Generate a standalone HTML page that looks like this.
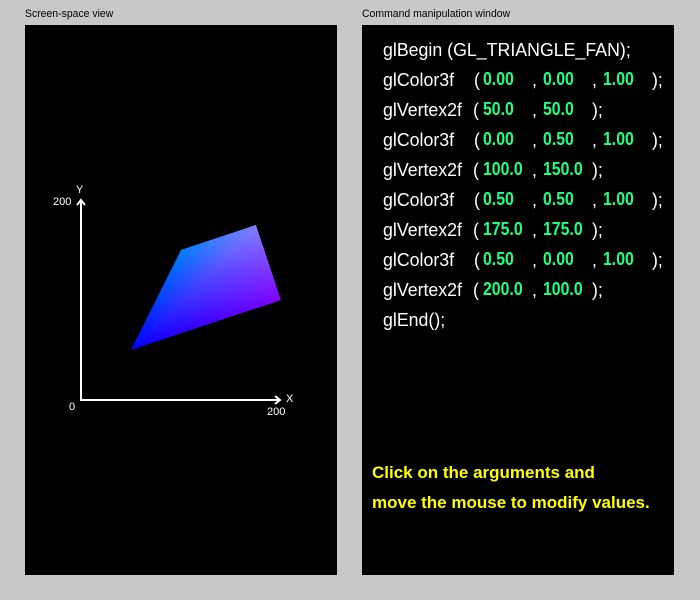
<!DOCTYPE html>
<html><head><meta charset="utf-8"><style>
html,body{margin:0;padding:0}
body{width:700px;height:600px;background:#c8c8c8;position:relative;overflow:hidden;font-family:"Liberation Sans",sans-serif}
.lbl{position:absolute;font-size:11px;color:#000;top:8px;transform:scaleX(0.95);transform-origin:left}
.panel{position:absolute;background:#000;top:25px;height:550px;width:312px}
.t{position:absolute;white-space:pre;color:#fff;font-size:18.5px;line-height:19px;transform:scaleX(0.96);transform-origin:left}
.g{color:#20ff80;font-weight:bold;font-size:18px;transform:scaleX(0.88)}
.y{position:absolute;color:#ffff00;font-weight:bold;font-size:17px;left:372px;white-space:pre}
</style></head><body>
<div class="lbl" style="left:25px">Screen-space view</div>
<div class="lbl" style="left:362px">Command manipulation window</div>
<div class="panel" style="left:25px"></div>
<div class="panel" style="left:362px"></div>
<svg width="700" height="600" style="position:absolute;left:0;top:0">
<defs>
<linearGradient id="r1" gradientUnits="userSpaceOnUse" x1="131" y1="350" x2="181" y2="375"><stop offset="0" stop-color="#000"/><stop offset="1" stop-color="#800000"/></linearGradient>
<linearGradient id="g1" gradientUnits="userSpaceOnUse" x1="131" y1="350" x2="106" y2="275"><stop offset="0" stop-color="#000"/><stop offset="1" stop-color="#008000"/></linearGradient>
<linearGradient id="r2" gradientUnits="userSpaceOnUse" x1="131" y1="350" x2="281" y2="300"><stop offset="0" stop-color="#000"/><stop offset="1" stop-color="#800000"/></linearGradient>
</defs>
<g style="isolation:isolate" shape-rendering="crispEdges">
<polygon points="131,350 181,250 256,225 281,300" fill="#0000ff"/>
<polygon points="131,350 181,250 256,225" fill="url(#r1)" style="mix-blend-mode:lighten"/>
<polygon points="131,350 256,225 281,300" fill="url(#r2)" style="mix-blend-mode:lighten"/>
<polygon points="131,350 181,250 256,225 281,300" fill="url(#g1)" style="mix-blend-mode:lighten"/>
</g>
<g stroke="#fff" stroke-width="2" fill="none">
<path d="M81,200 V400 H280"/>
<path d="M77,205 L81,200 L85,205"/>
<path d="M275,396 L280,400 L275,404"/>
</g>
<g fill="#fff" font-family="Liberation Sans, sans-serif" font-size="11">
<text x="53" y="205">200</text>
<text x="76" y="193">Y</text>
<text x="69" y="410">0</text>
<text x="286" y="402">X</text>
<text x="267" y="415">200</text>
</g>
</svg>
<div class="t" style="left:383px;top:40px">glBegin (GL_TRIANGLE_FAN);</div>

<div class="t" style="left:383px;top:70px">glColor3f</div><div class="t" style="left:474px;top:70px">(</div><div class="t g" style="left:483px;top:70px">0.00</div><div class="t" style="left:532px;top:70px">,</div><div class="t g" style="left:543px;top:70px">0.00</div><div class="t" style="left:592px;top:70px">,</div><div class="t g" style="left:603px;top:70px">1.00</div><div class="t" style="left:652px;top:70px">);</div>

<div class="t" style="left:383px;top:100px">glVertex2f</div><div class="t" style="left:473px;top:100px">(</div><div class="t g" style="left:483px;top:100px">50.0</div><div class="t" style="left:532px;top:100px">,</div><div class="t g" style="left:543px;top:100px">50.0</div><div class="t" style="left:592px;top:100px">);</div>

<div class="t" style="left:383px;top:130px">glColor3f</div><div class="t" style="left:474px;top:130px">(</div><div class="t g" style="left:483px;top:130px">0.00</div><div class="t" style="left:532px;top:130px">,</div><div class="t g" style="left:543px;top:130px">0.50</div><div class="t" style="left:592px;top:130px">,</div><div class="t g" style="left:603px;top:130px">1.00</div><div class="t" style="left:652px;top:130px">);</div>

<div class="t" style="left:383px;top:160px">glVertex2f</div><div class="t" style="left:473px;top:160px">(</div><div class="t g" style="left:483px;top:160px">100.0</div><div class="t" style="left:532px;top:160px">,</div><div class="t g" style="left:543px;top:160px">150.0</div><div class="t" style="left:592px;top:160px">);</div>

<div class="t" style="left:383px;top:190px">glColor3f</div><div class="t" style="left:474px;top:190px">(</div><div class="t g" style="left:483px;top:190px">0.50</div><div class="t" style="left:532px;top:190px">,</div><div class="t g" style="left:543px;top:190px">0.50</div><div class="t" style="left:592px;top:190px">,</div><div class="t g" style="left:603px;top:190px">1.00</div><div class="t" style="left:652px;top:190px">);</div>

<div class="t" style="left:383px;top:220px">glVertex2f</div><div class="t" style="left:473px;top:220px">(</div><div class="t g" style="left:483px;top:220px">175.0</div><div class="t" style="left:532px;top:220px">,</div><div class="t g" style="left:543px;top:220px">175.0</div><div class="t" style="left:592px;top:220px">);</div>

<div class="t" style="left:383px;top:250px">glColor3f</div><div class="t" style="left:474px;top:250px">(</div><div class="t g" style="left:483px;top:250px">0.50</div><div class="t" style="left:532px;top:250px">,</div><div class="t g" style="left:543px;top:250px">0.00</div><div class="t" style="left:592px;top:250px">,</div><div class="t g" style="left:603px;top:250px">1.00</div><div class="t" style="left:652px;top:250px">);</div>

<div class="t" style="left:383px;top:280px">glVertex2f</div><div class="t" style="left:473px;top:280px">(</div><div class="t g" style="left:483px;top:280px">200.0</div><div class="t" style="left:532px;top:280px">,</div><div class="t g" style="left:543px;top:280px">100.0</div><div class="t" style="left:592px;top:280px">);</div>

<div class="t" style="left:383px;top:310px">glEnd();</div>

<div class="y" style="top:463px">Click on the arguments and</div>
<div class="y" style="top:493px">move the mouse to modify values.</div>
</body></html>
